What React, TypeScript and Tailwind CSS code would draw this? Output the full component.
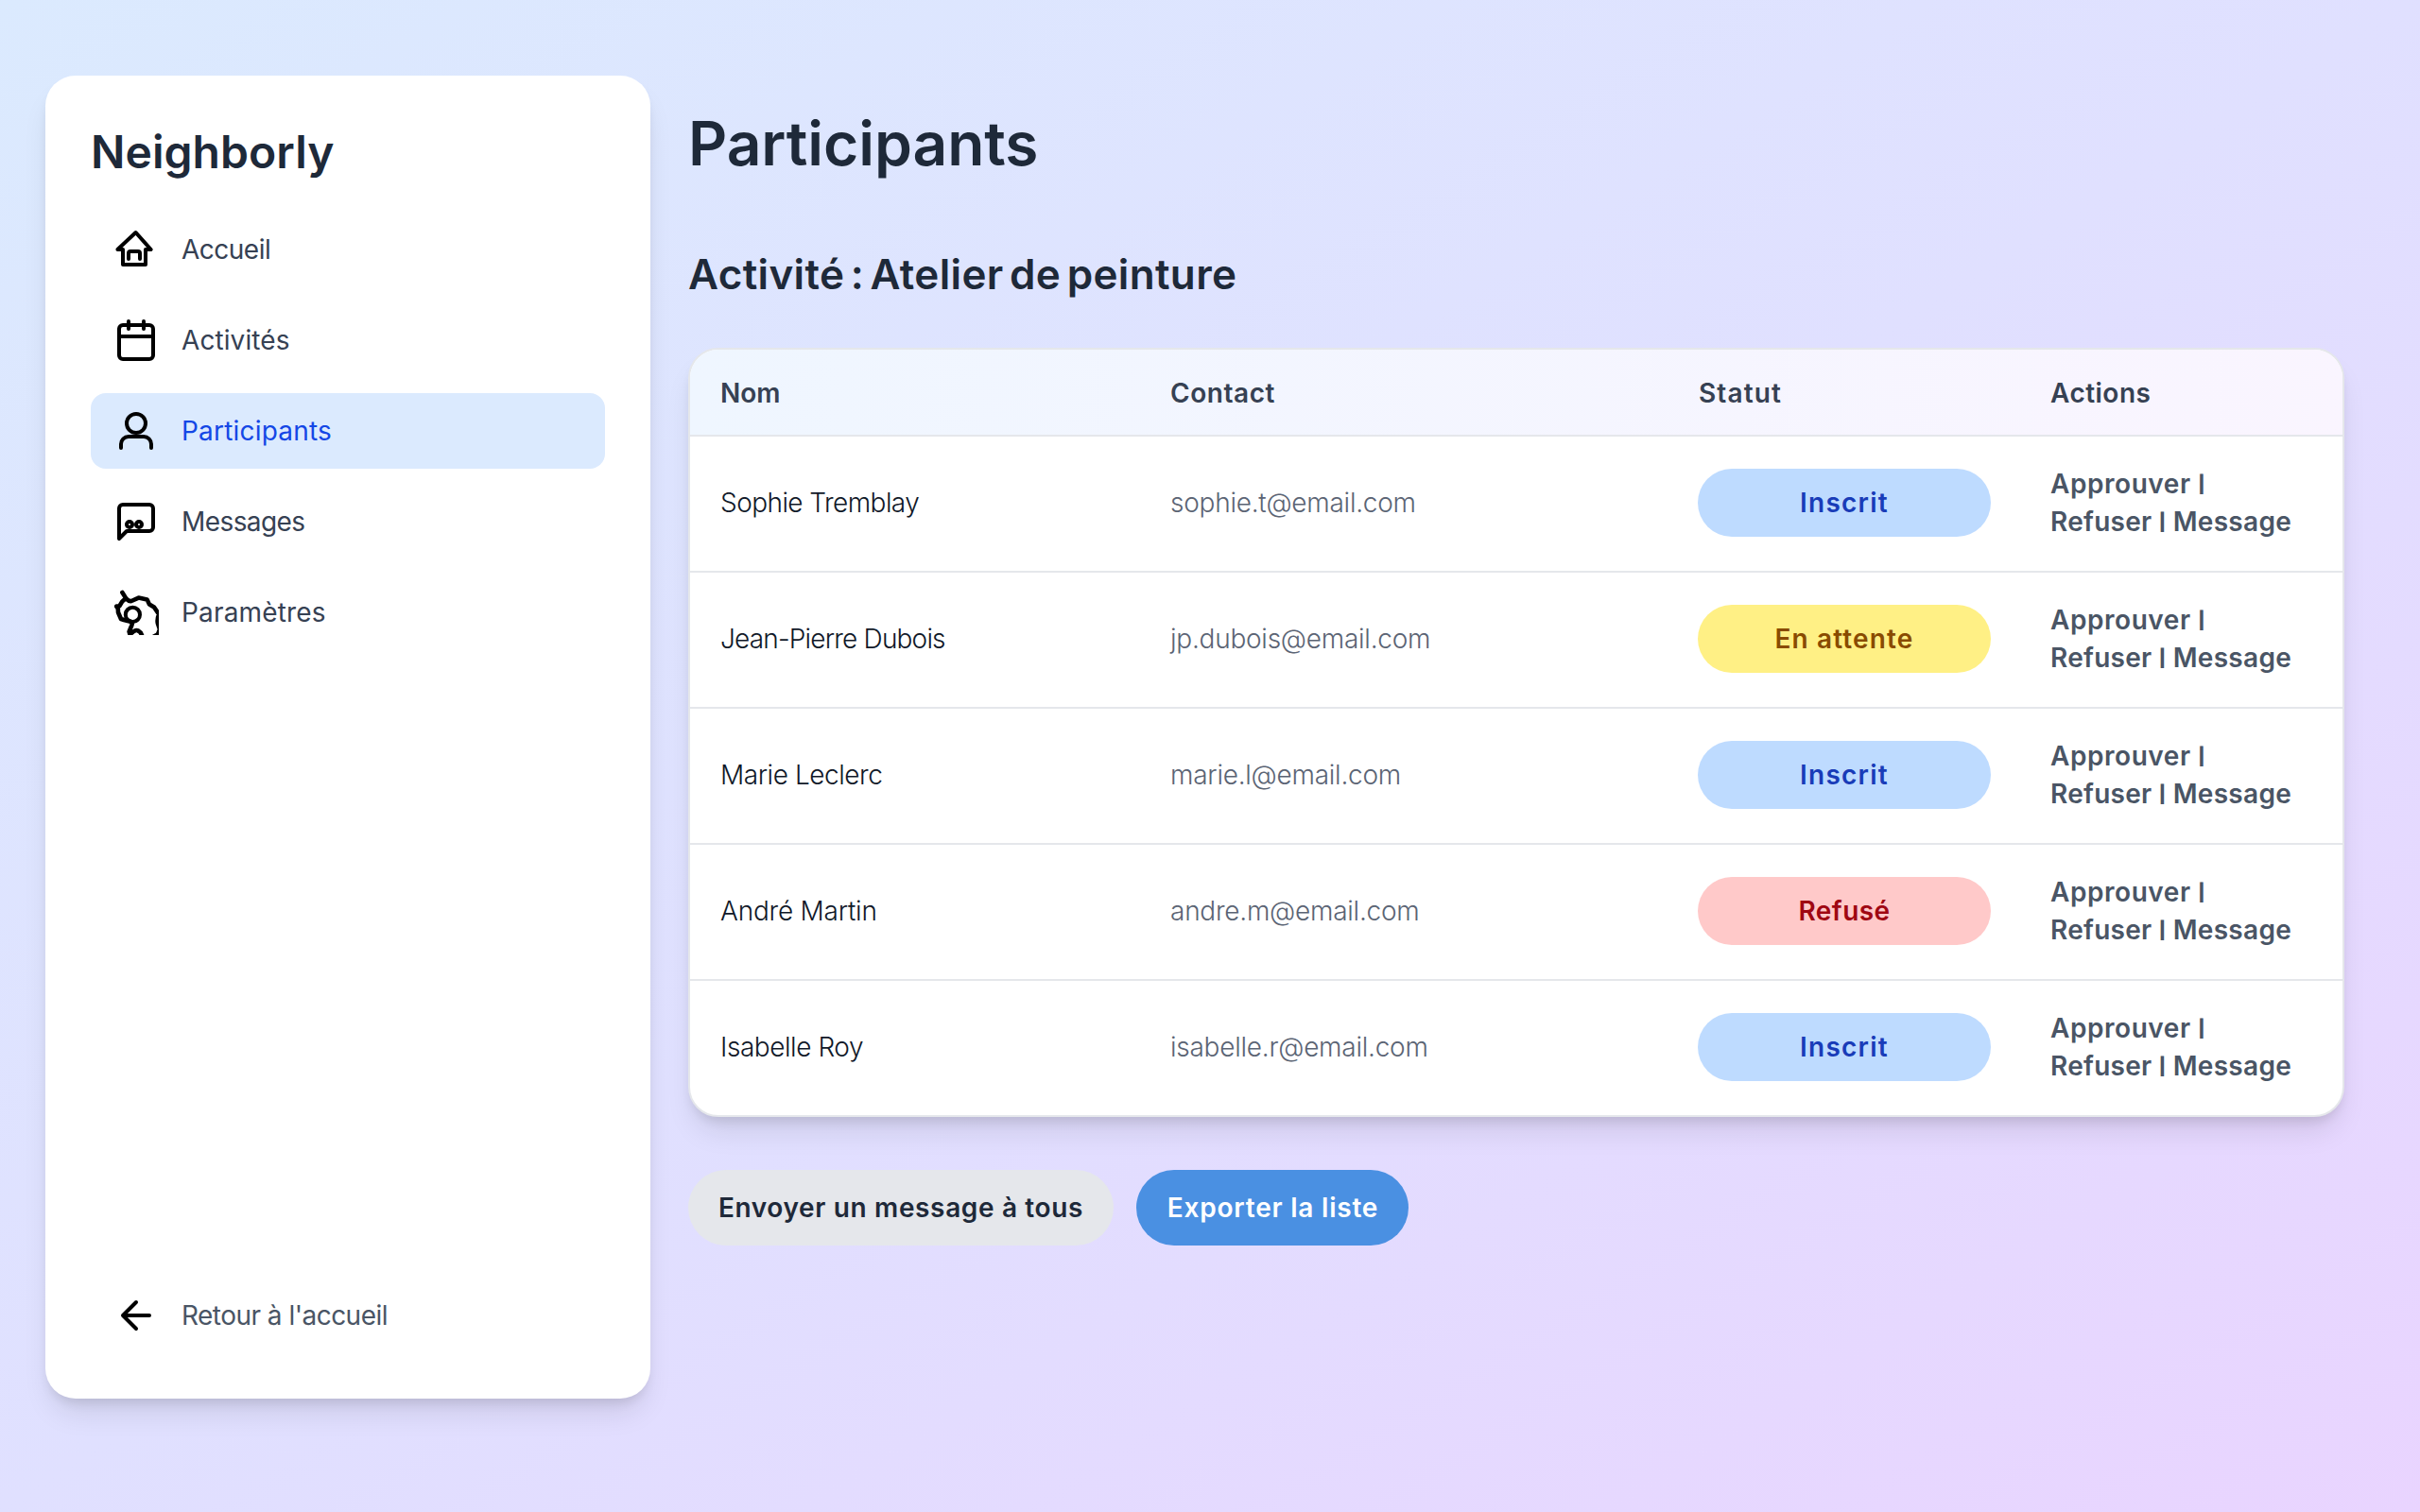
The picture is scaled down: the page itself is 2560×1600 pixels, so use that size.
import React from "react";

const iconProps = {
  viewBox: "0 0 24 24",
  fill: "none",
  stroke: "#000",
  strokeWidth: 2,
  strokeLinecap: "round" as const,
  strokeLinejoin: "round" as const,
  className: "h-12 w-12 shrink-0 overflow-hidden",
};

const HomeIcon = () => (
  <svg {...iconProps}>
    <path d="M5 12H2.200l9.600-9 8 9H17v8H5z" />
    <path d="M8 17v-3a1 1 0 0 1 1-1h4a1 1 0 0 1 1 1v3" />
  </svg>
);
const CalendarIcon = () => (
  <svg {...iconProps}>
    <rect x="3" y="4" width="18" height="18" rx="2" />
    <path d="M16 2v4M8 2v4M3 10h18" />
  </svg>
);
const UserIcon = () => (
  <svg {...iconProps}>
    <path d="M20 21v-2a4 4 0 0 0-4-4H8a4 4 0 0 0-4 4v2" />
    <circle cx="12" cy="8" r="5" />
  </svg>
);
const MessageIcon = () => (
  <svg {...iconProps}>
    <path d="M21 15a2 2 0 0 1-2 2H7l-4 4V5a2 2 0 0 1 2-2h14a2 2 0 0 1 2 2z" />
    <circle cx="8.5" cy="13.5" r="1.5" />
    <circle cx="13.5" cy="13.5" r="1.5" />
  </svg>
);
const SettingsIcon = () => (
  <svg {...iconProps}>
    <circle cx="10.2" cy="13.2" r="3.8" />
    <path
      strokeWidth="2.3"
      d="M4.700 1.500L6.700 4.700Q8.200 6.300 9.500 6L13.300 4.300L17.800 5.200L19 7.800L21.500 9.200L23.200 11.800L24 13Q22.900 16 23.500 18L24.500 21L23.500 23.600L21 25M6.300 4.700L4.600 6.300L3.200 8.600L1.600 8.800L2.400 10L2.500 12L4 15.500L5.500 16L9 16.900M10 17.500L9.700 18.800L8.300 22.200L9 24.500M9 23.500Q11.500 21 13 21.700Q14.500 22.500 15 24"
    />
  </svg>
);
const ArrowIcon = () => (
  <svg {...iconProps}>
    <path d="M19 12H5M12 19l-7-7 7-7" />
  </svg>
);

const nav = [
  { label: "Accueil", Icon: HomeIcon, tracking: "tracking-[-0.018em]" },
  { label: "Activités", Icon: CalendarIcon, tracking: "tracking-[0.003em]" },
  { label: "Participants", Icon: UserIcon, tracking: "tracking-[0.007em]", active: true },
  { label: "Messages", Icon: MessageIcon, tracking: "tracking-[-0.021em]" },
  { label: "Paramètres", Icon: SettingsIcon, tracking: "tracking-[0.006em]" },
];

const statusStyle: Record<string, string> = {
  Inscrit: "bg-[#bedbff] text-[#193cb8] tracking-[0.045em]",
  "En attente": "bg-[#fff085] text-[#894b00] tracking-[0.04em]",
  Refusé: "bg-[#ffc9c9] text-[#9f0712] tracking-[0.015em]",
};

const rows = [
  ["Sophie Tremblay", "sophie.t@email.com", "Inscrit", "tracking-[-0.02em]"],
  ["Jean-Pierre Dubois", "jp.dubois@email.com", "En attente", "tracking-[-0.029em]"],
  ["Marie Leclerc", "marie.l@email.com", "Inscrit", "tracking-[-0.016em]"],
  ["André Martin", "andre.m@email.com", "Refusé", "tracking-[-0.008em]"],
  ["Isabelle Roy", "isabelle.r@email.com", "Inscrit", "tracking-[-0.016em]"],
];

const Bar = () => <span className="align-[3px] text-[18px] leading-none font-black">|</span>;

export default function App() {
  return (
    <div className="flex h-[1600px] w-[2560px] gap-10 bg-linear-to-br from-[#dbeafe] via-[#e0e0ff] to-[#e9d4ff] px-12 py-20 font-['Inter',sans-serif] text-[28px] leading-10 text-[#1e2939]">
      <aside className="flex h-[1400px] w-[640px] shrink-0 flex-col rounded-[32px] bg-white p-12 shadow-[0_20px_30px_-6px_rgb(0_0_0/0.1),0_8px_12px_-4px_rgb(0_0_0/0.1)]">
        <div className="mb-8 h-16 pt-px text-[48px] leading-16 font-semibold tracking-[0.001em]">Neighborly</div>
        <nav className="flex flex-1 flex-col gap-4">
          {nav.map(({ label, Icon, tracking, active }) => (
            <a
              key={label}
              className={
                active
                  ? "flex h-20 items-center gap-6 rounded-2xl bg-[#dbeafe] px-6 text-[#1447e6]"
                  : "flex h-20 items-center gap-6 rounded-2xl px-6 text-[#364153]"
              }
            >
              <Icon />
              <span className={tracking}>{label}</span>
            </a>
          ))}
        </nav>
        <a className="flex h-20 items-center gap-6 px-6 text-[#4a5565]">
          <ArrowIcon />
          <span className="tracking-[-0.019em]">Retour à l'accueil</span>
        </a>
      </aside>

      <main className="flex w-[1752px] flex-col pt-8">
        <h1 className="h-20 text-[64px] leading-20 font-semibold tracking-[-0.001em]">Participants</h1>
        <h2 className="mt-[70px] h-14 text-[44px] leading-14 font-semibold tracking-[0.008em] [word-spacing:-5px]">Activité : Atelier de peinture</h2>

        <section className="mt-[50px] h-[814px] overflow-hidden rounded-[32px] border-2 border-gray-200 bg-white shadow-[0_20px_30px_-6px_rgb(0_0_0/0.1),0_8px_12px_-4px_rgb(0_0_0/0.1)]">
          <div className="grid h-[92px] grid-cols-[476px_558px_373px_341px] items-center border-b-2 border-gray-200 bg-linear-to-r from-[#eff6ff] to-[#faf5ff] pt-0.5 font-semibold text-[#364153]">
            <span className="pl-8">Nom</span>
            <span className="pl-8 tracking-[0.02em]">Contact</span>
            <span className="pl-[33px] tracking-[0.04em]">Statut</span>
            <span className="pl-8 tracking-[0.017em]">Actions</span>
          </div>
          {rows.map(([name, mail, status, tracking]) => (
            <div
              key={name}
              className="grid h-36 grid-cols-[476px_558px_374px_340px] items-center border-b-2 border-gray-200 pb-0.5 last:h-[142px] last:border-b-0"
            >
              <span className={`pl-8 font-[350] text-[#101828] ${tracking}`}>{name}</span>
              <span className="pl-8 font-light tracking-[-0.009em] text-[#5b6474]">{mail}</span>
              <div className="px-8">
                <div className={`flex h-18 items-center justify-center rounded-full font-semibold ${statusStyle[status]}`}>
                  {status}
                </div>
              </div>
              <div className="pl-[31px] font-semibold text-[#4a5565]">
                <div className="tracking-[0.02em]">Approuver <Bar /></div>
                <div className="tracking-[0.01em]">Refuser <Bar /> Message</div>
              </div>
            </div>
          ))}
        </section>

        <div className="mt-14 flex gap-6 font-semibold">
          <button className="flex h-20 w-[450px] items-center justify-center rounded-full bg-gray-200 tracking-[0.023em] whitespace-nowrap">Envoyer un message à tous</button>
          <button className="flex h-20 w-72 items-center justify-center rounded-full bg-[#4a90e2] pl-px tracking-[0.028em] whitespace-nowrap text-white">Exporter la liste</button>
        </div>
      </main>
    </div>
  );
}
